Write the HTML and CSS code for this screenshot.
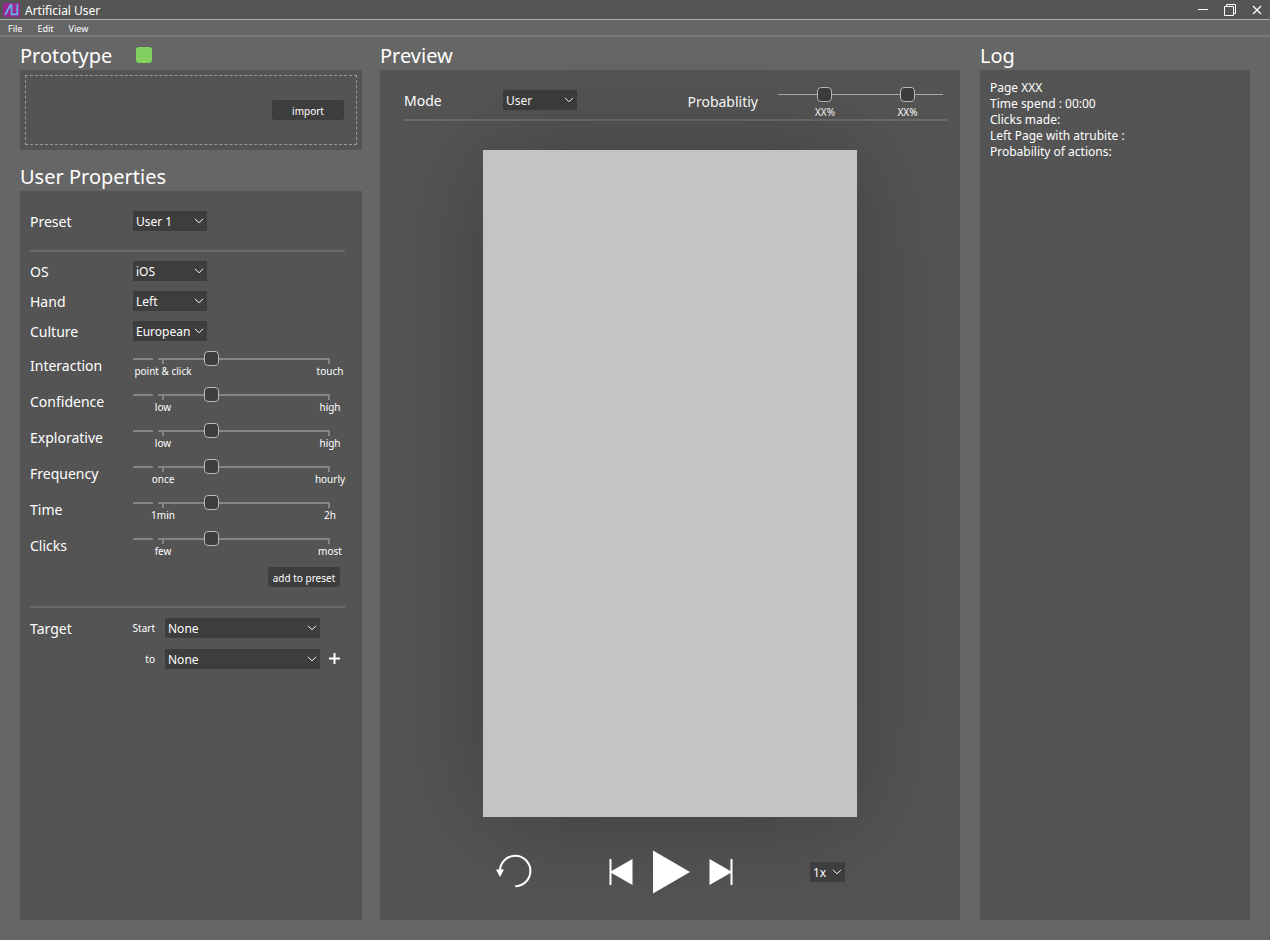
FILE: index.html
```html
<!DOCTYPE html>
<html lang="en">
<head>
<meta charset="utf-8">
<title>Artificial User</title>
<link rel="stylesheet" href="styles.css">
</head>
<body>
<svg class="defs" width="0" height="0" aria-hidden="true">
  <symbol id="chevron" viewBox="0 0 10 6"><path d="M1 0.8 L5 4.8 L9 0.8" fill="none" stroke="#fff" stroke-width="1"/></symbol>
</svg>

<header class="titlebar">
  <svg class="logo" width="17" height="14" viewBox="0 0 17 14" aria-hidden="true">
    <rect width="17" height="14" fill="#982b90"/>
    <path d="M2.2 11.8 L7.4 2 H8.6 V11.4 H14.3 V1.2" fill="none" stroke="#62b5ee" stroke-width="1.7"/>
  </svg>
  <span class="app-name">Artificial User</span>
  <div class="window-buttons">
    <button type="button" aria-label="Minimize"><svg width="14" height="14" viewBox="0 0 14 14"><path d="M2 6.5 H12" stroke="#fff"/></svg></button>
    <button type="button" aria-label="Restore"><svg width="14" height="14" viewBox="0 0 14 14"><path d="M1.5 3.5 H10.5 V12.5 H1.5 Z M3.5 3.5 V1.5 H12.5 V10.5 H10.5" fill="none" stroke="#fff"/></svg></button>
    <button type="button" aria-label="Close"><svg width="14" height="14" viewBox="0 0 14 14"><path d="M3 3 L11 11 M11 3 L3 11" stroke="#fff" stroke-width="1.3"/></svg></button>
  </div>
</header>

<nav class="menubar">
  <button type="button">File</button>
  <button type="button">Edit</button>
  <button type="button">View</button>
</nav>

<main class="workspace">
  <div class="column">
    <h2 class="heading">Prototype <span class="status"></span></h2>
    <section class="panel prototype">
      <div class="dropzone"><button type="button" class="button">import</button></div>
    </section>

    <h2 class="heading heading-next">User Properties</h2>
    <section class="panel properties">
      <div class="row row-preset">
        <label for="preset">Preset</label>
        <span class="select"><select id="preset"><option>User 1</option></select><svg class="chevron"><use href="#chevron"/></svg></span>
      </div>
      <hr>
      <div class="choices">
        <div class="row">
          <label for="os">OS</label>
          <span class="select"><select id="os"><option>iOS</option></select><svg class="chevron"><use href="#chevron"/></svg></span>
        </div>
        <div class="row">
          <label for="hand">Hand</label>
          <span class="select"><select id="hand"><option>Left</option></select><svg class="chevron"><use href="#chevron"/></svg></span>
        </div>
        <div class="row">
          <label for="culture">Culture</label>
          <span class="select"><select id="culture"><option>European</option></select><svg class="chevron"><use href="#chevron"/></svg></span>
        </div>
      </div>
      <div class="row row-slider">
        <label for="interaction">Interaction</label>
        <div class="slider"><input id="interaction" class="range" type="range" value="39"><div class="scale"><span>point &amp; click</span><span>touch</span></div></div>
      </div>
      <div class="row row-slider">
        <label for="confidence">Confidence</label>
        <div class="slider"><input id="confidence" class="range" type="range" value="39"><div class="scale"><span>low</span><span>high</span></div></div>
      </div>
      <div class="row row-slider">
        <label for="explorative">Explorative</label>
        <div class="slider"><input id="explorative" class="range" type="range" value="39"><div class="scale"><span>low</span><span>high</span></div></div>
      </div>
      <div class="row row-slider">
        <label for="frequency">Frequency</label>
        <div class="slider"><input id="frequency" class="range" type="range" value="39"><div class="scale"><span>once</span><span>hourly</span></div></div>
      </div>
      <div class="row row-slider">
        <label for="time">Time</label>
        <div class="slider"><input id="time" class="range" type="range" value="39"><div class="scale"><span>1min</span><span>2h</span></div></div>
      </div>
      <div class="row row-slider">
        <label for="clicks">Clicks</label>
        <div class="slider"><input id="clicks" class="range" type="range" value="39"><div class="scale"><span>few</span><span>most</span></div></div>
      </div>
      <div class="actions"><button type="button" class="button">add to preset</button></div>
      <hr>
      <div class="target">
        <span>Target</span>
        <label class="small" for="start">Start</label>
        <span class="select select-wide"><select id="start"><option>None</option></select><svg class="chevron"><use href="#chevron"/></svg></span>
        <label class="small target-to" for="to">to</label>
        <span class="select select-wide"><select id="to"><option>None</option></select><svg class="chevron"><use href="#chevron"/></svg></span>
        <button type="button" class="icon-button" aria-label="Add target"><svg width="11" height="11" viewBox="0 0 11 11"><path d="M5.5 0 V11 M0 5.5 H11" stroke="#fff" stroke-width="2"/></svg></button>
      </div>
    </section>
  </div>

  <div class="column">
    <h2 class="heading">Preview</h2>
    <section class="panel preview">
      <div class="toolbar">
        <div class="row">
          <label for="mode">Mode</label>
          <span class="select"><select id="mode"><option>User</option></select><svg class="chevron"><use href="#chevron"/></svg></span>
        </div>
        <div class="probability">
          <span>Probablitiy</span>
          <div class="dual">
            <input class="range range-dual" type="range" value="26" aria-label="Lower probability">
            <input class="range range-dual" type="range" value="81" aria-label="Upper probability">
            <div class="dual-scale"><span>XX%</span><span>XX%</span></div>
          </div>
        </div>
      </div>
      <div class="device"></div>
      <div class="player">
        <button type="button" class="icon-button" aria-label="Replay"><svg width="36" height="36" viewBox="0 0 36 36"><path d="M4 17 A15.2 15.2 0 1 1 19.2 32.2" fill="none" stroke="#fff" stroke-width="2"/><path d="M0 15.5 H8 L4 23 Z" fill="#fff"/></svg></button>
        <div class="transport">
          <button type="button" class="icon-button" aria-label="Previous"><svg width="24" height="26" viewBox="0 0 24 26"><path d="M0.5 0 H2.5 V12 L23.5 0 V26 L2.5 14 V26 H0.5 Z" fill="#fff"/></svg></button>
          <button type="button" class="icon-button" aria-label="Play"><svg width="38" height="44" viewBox="0 0 38 44"><path d="M1 0.5 L38 22 L1 43.5 Z" fill="#fff"/></svg></button>
          <button type="button" class="icon-button" aria-label="Next"><svg width="24" height="26" viewBox="0 0 24 26"><path d="M23.5 0 H21.5 V12 L0.5 0 V26 L21.5 14 V26 H23.5 Z" fill="#fff"/></svg></button>
        </div>
        <span class="select select-speed"><select aria-label="Speed"><option>1x</option></select><svg class="chevron"><use href="#chevron"/></svg></span>
      </div>
    </section>
  </div>

  <div class="column column-log">
    <h2 class="heading">Log</h2>
    <section class="panel log">
      <p>Page XXX</p>
      <p>Time spend : 00:00</p>
      <p>Clicks made:</p>
      <p>Left Page with atrubite :</p>
      <p>Probability of actions:</p>
    </section>
  </div>
</main>
</body>
</html>
```
FILE: styles.css
```css
* { box-sizing: border-box; }

body {
  margin: 0;
  min-height: 100vh;
  display: flex;
  flex-direction: column;
  background: #666;
  color: #fff;
  font: 14px/20px "Noto Sans", "Open Sans", sans-serif;
}

button, select, input { font: inherit; color: inherit; margin: 0; }
button { border: 0; padding: 0; background: none; cursor: pointer; }
svg { display: block; }
.defs { position: absolute; }
p { margin: 0; }

.titlebar {
  display: flex;
  align-items: center;
  height: 20px;
  padding: 0 6px 0 3px;
  background: #555;
  border-bottom: 1px solid #b0b0b0;
}
.app-name { margin-left: 5px; padding-top: 2px; font-size: 12px; line-height: 18px; }
.window-buttons { display: flex; gap: 13px; margin-left: auto; }

.menubar {
  display: flex;
  gap: 15px;
  height: 17px;
  padding: 2px 8px 0;
  border-bottom: 2px solid #777;
  font-size: 9px;
  line-height: 14px;
}

.workspace {
  flex: 1;
  display: grid;
  grid-template-columns: 342fr 580fr 272fr;
  gap: 18px;
  padding: 0 20px 20px;
}
.column { display: flex; flex-direction: column; min-width: 0; }
.column-log { padding-left: 2px; }

.heading {
  display: flex;
  align-items: center;
  gap: 24px;
  margin: 0;
  padding-top: 5px;
  font-size: 20px;
  line-height: 28px;
  font-weight: 400;
}
.heading-next { padding-top: 13px; }
.status { width: 16px; height: 16px; margin-bottom: 2px; border-radius: 3px; background: #82d160; }

.panel { background: #545454; }
.prototype { padding: 5px; }
.dropzone {
  display: flex;
  align-items: center;
  justify-content: flex-end;
  height: 70px;
  padding-right: 12px;
  border: 1px dashed #999;
}
.button {
  width: 72px;
  height: 20px;
  padding-top: 1px;
  border-radius: 3px;
  background: #3d3d3d;
  font-size: 10px;
  white-space: nowrap;
}

.properties { flex: 1; padding: 20px 17px 20px 10px; }
hr { height: 2px; margin: 0; border: 0; background: #6a6a6a; }
.row { display: grid; grid-template-columns: 103px 1fr; align-items: center; }
.row label { line-height: 18px; padding-top: 2px; }
.row-preset { margin-bottom: 19px; }
.choices { display: grid; gap: 10px; padding: 9px 0 6px; }

.select { display: grid; width: 74px; align-items: center; }
.select select {
  grid-area: 1 / 1;
  width: 100%;
  height: 20px;
  padding: 2px 3px 0;
  border: 0;
  border-radius: 0;
  appearance: none;
  background: #3d3d3d;
  font-size: 12px;
  line-height: 18px;
}
.chevron {
  grid-area: 1 / 1;
  justify-self: end;
  width: 10px;
  height: 6px;
  margin-right: 3px;
  pointer-events: none;
}

.row-slider { height: 36px; }
.slider { height: 28px; }
.range {
  display: block;
  width: calc(100% - 15px);
  height: 15px;
  appearance: none;
  background:
    linear-gradient(#858585, #858585) 0 7px / 20px 2px,
    linear-gradient(#858585, #858585) 29px 7px / 2px 6px,
    linear-gradient(#858585, #858585) 100% 7px / 2px 6px,
    linear-gradient(#858585, #858585) 100% 7px / calc(100% - 25px) 2px;
  background-repeat: no-repeat;
}
.range::-webkit-slider-thumb {
  appearance: none;
  width: 15px;
  height: 15px;
  border: 1px solid #b8b8b8;
  border-radius: 4px;
  background: #3d3d3d;
  pointer-events: auto;
}
.scale {
  display: flex;
  justify-content: space-between;
  margin-right: -15px;
  font-size: 10px;
  line-height: 10px;
}
.scale span { width: 60px; text-align: center; white-space: nowrap; }

.actions { display: flex; justify-content: flex-end; padding: 4px 5px 19px 0; }
.target {
  display: grid;
  grid-template-columns: 90px 45px minmax(0, 155px) auto;
  row-gap: 10px;
  align-items: center;
  padding-top: 9px;
}
.target > span:first-child { line-height: 18px; padding-top: 2px; }
.small { padding-top: 1px; margin-right: 10px; font-size: 10px; text-align: right; }
.target-to { grid-column: 2; }
.select-wide { width: 100%; }
.icon-button { justify-self: start; }
.target .icon-button { margin-left: 9px; }

.preview { flex: 1; display: flex; flex-direction: column; align-items: center; padding: 16px 13px 26px 24px; }
.toolbar {
  align-self: stretch;
  display: flex;
  justify-content: space-between;
  height: 35px;
  padding-right: 4px;
  border-bottom: 2px solid #6a6a6a;
}
.toolbar .row { grid-template-columns: 99px 74px; height: 28px; }
.probability { display: flex; gap: 20px; }
.probability > span { line-height: 31px; }
.dual { display: grid; width: 165px; align-content: start; }
.range-dual {
  grid-area: 1 / 1;
  width: 100%;
  height: 16px;
  pointer-events: none;
  background: linear-gradient(#aaa, #aaa) 0 8px / 100% 1px no-repeat;
}
.range-dual + .range-dual { background: none; }
.dual-scale {
  display: grid;
  grid-template-columns: 94fr 71fr;
  font-size: 10px;
  line-height: 20px;
  text-align: center;
}

.device {
  width: 374px;
  max-width: 100%;
  aspect-ratio: 374 / 667;
  margin: 29px 11px 0 0;
  background: #c4c4c4;
  box-shadow: 0 4px 100px rgba(0, 0, 0, 0.25);
}
.player {
  display: grid;
  grid-template-columns: 1fr auto 1fr;
  align-items: center;
  width: 374px;
  max-width: 100%;
  margin: 33px 11px 0 0;
  padding: 0 12px 0 13px;
}
.transport { display: flex; align-items: center; gap: 19px; }
.select-speed { width: 35px; justify-self: end; }

.log { flex: 1; padding: 10px; font-size: 12px; line-height: 16px; }
```
